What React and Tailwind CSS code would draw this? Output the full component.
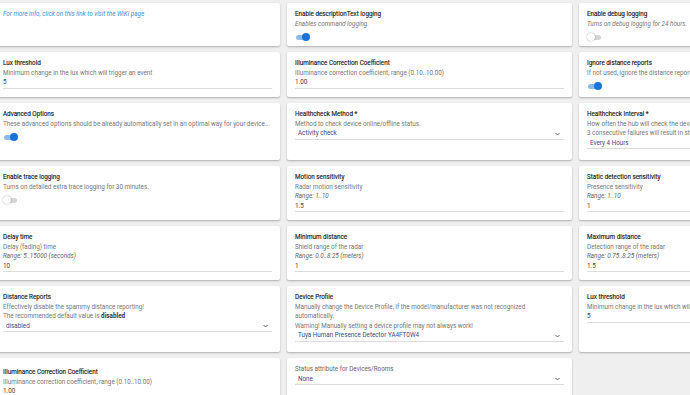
import React from "react";

const cards = [
  // row 1
  { kind: "link", text: "For more info, click on this link to visit the WiKi page" },
  { kind: "toggle", title: "Enable descriptionText logging", desc: ["Enables command logging."], italic: true, on: true },
  { kind: "toggle", title: "Enable debug logging", desc: ["Turns on debug logging for 24 hours."], italic: true, on: false },
  // row 2
  { kind: "input", title: "Lux threshold", desc: ["Minimum change in the lux which will trigger an event"], value: "5" },
  { kind: "input", title: "Illuminance Correction Coefficient", desc: ["Illuminance correction coefficient, range (0.10..10.00)"], value: "1.00" },
  { kind: "toggle", title: "Ignore distance reports", desc: ["If not used, ignore the distance reports received every 1 second!"], on: true },
  // row 3
  {
    kind: "toggle",
    title: "Advanced Options",
    desc: ["These advanced options should be already automatically set in an optimal way for your device..."],
    on: true,
  },
  { kind: "select", title: "Healthcheck Method *", desc: ["Method to check device online/offline status."], value: "Activity check" },
  {
    kind: "select",
    title: "Healthcheck Interval *",
    desc: ["How often the hub will check the device health.", "3 consecutive failures will result in status 'offline'"],
    value: "Every 4 Hours",
  },
  // row 4
  { kind: "toggle", title: "Enable trace logging", desc: ["Turns on detailed extra trace logging for 30 minutes."], on: false },
  { kind: "input", title: "Motion sensitivity", desc: ["Radar motion sensitivity"], range: "Range: 1..10", value: "1.5" },
  { kind: "input", title: "Static detection sensitivity", desc: ["Presence sensitivity"], range: "Range: 1..10", value: "1" },
  // row 5
  { kind: "input", title: "Delay time", desc: ["Delay (fading) time"], range: "Range: 5..15000 (seconds)", value: "10" },
  { kind: "input", title: "Minimum distance", desc: ["Shield range of the radar"], range: "Range: 0.0..8.25 (meters)", value: "1" },
  { kind: "input", title: "Maximum distance", desc: ["Detection range of the radar"], range: "Range: 0.75..8.25 (meters)", value: "1.5" },
  // row 6
  {
    kind: "select",
    title: "Distance Reports",
    desc: [
      "Effectively disable the spammy distance reporting!",
      <>
        The recommended default value is <b className="font-bold text-[#333]">disabled</b>
      </>,
    ],
    value: "disabled",
  },
  {
    kind: "select",
    title: "Device Profile",
    desc: [
      "Manually change the Device Profile, if the model/manufacturer was not recognized",
      "automatically.",
      "Warning! Manually setting a device profile may not always work!",
    ],
    value: "Tuya Human Presence Detector YA4FT0W4",
  },
  { kind: "input", title: "Lux threshold", desc: ["Minimum change in the lux which will trigger an event"], value: "5" },
  // row 7
  {
    kind: "input",
    title: "Illuminance Correction Coefficient",
    desc: ["Illuminance correction coefficient, range (0.10..10.00)"],
    value: "1.00",
    top: "pt-[10px]",
  },
  { kind: "select", label: "Status attribute for Devices/Rooms", value: "None" },
  { kind: "empty" },
];

function Toggle({ on }) {
  return (
    <div className="relative mt-[4px] h-[8px] w-[15px]">
      <div
        className={`absolute left-[1px] top-[1.5px] h-[5px] w-[13px] rounded-full ${
          on ? "bg-[#8cbcee]" : "bg-[#d6d6d6]"
        }`}
      />
      <div
        className={`absolute top-0 h-[8px] w-[8px] rounded-full ${
          on ? "left-[7px] bg-[#1a73d9]" : "left-0 bg-white shadow-[0_0_1.5px_rgba(0,0,0,0.45)]"
        }`}
      />
    </div>
  );
}

function Chevron() {
  return (
    <svg width="5" height="4" viewBox="0 0 10 8" className="mr-[4px] text-[#555]">
      <path d="M1 2 L5 6 L9 2" fill="none" stroke="currentColor" strokeWidth="1.8" />
    </svg>
  );
}

function Card({ card }) {
  if (card.kind === "empty") return <div />;

  return (
    <div className={`overflow-hidden rounded-[2px] bg-white px-[8px] shadow-[0_1px_2px_rgba(0,0,0,0.28)] ${card.top || "pt-[7px]"}`}>
      {card.kind === "link" && <div className="italic text-[#3b8fe3]">{card.text}</div>}

      {card.title && <div className="whitespace-nowrap text-[#1f1f1f] [-webkit-text-stroke:0.15px_#1f1f1f]">{card.title}</div>}
      {card.label && <div className="whitespace-nowrap text-[#666]">{card.label}</div>}

      {card.desc &&
        card.desc.map((d, i) => (
          <div key={i} className={`whitespace-nowrap text-[#777] ${card.italic ? "italic" : ""}`}>
            {d}
          </div>
        ))}

      {card.range && <div className="whitespace-nowrap italic text-[#666]">{card.range}</div>}

      {card.kind === "toggle" && <Toggle on={card.on} />}

      {card.kind === "input" && (
        <div className="flex h-[10.5px] items-center border-b border-[#dcdcdc] text-[#444]">{card.value}</div>
      )}

      {card.kind === "select" && (
        <div className="flex h-[10.5px] items-center justify-between border-b border-[#dcdcdc] pl-[3px] text-[#3d4a86]">
          <span className="whitespace-nowrap">{card.value}</span>
          <Chevron />
        </div>
      )}
    </div>
  );
}

export default function App() {
  return (
    <div
      className="h-[395px] w-[690px] overflow-hidden bg-[#efefef] pt-[3px] text-[6.3px] leading-[9.5px]"
      style={{ fontFamily: "Roboto, 'Noto Sans', sans-serif" }}
    >
      <div className="-ml-[5px] grid grid-cols-[285px_285px_285px] grid-rows-[43px_45px_57px_54px_54px_66px_60px] gap-x-[7px] gap-y-[6px]">
        {cards.map((c, i) => (
          <Card key={i} card={c} />
        ))}
      </div>
    </div>
  );
}
